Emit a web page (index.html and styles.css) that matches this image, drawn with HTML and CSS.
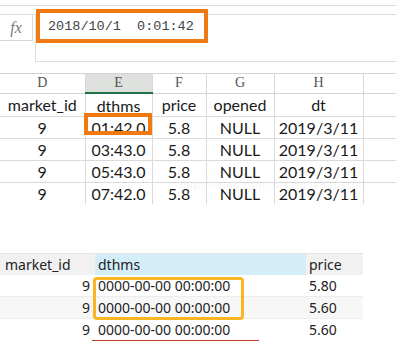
FILE: index.html
```html
<!DOCTYPE html>
<html lang="zh-CN">
<head>
<meta charset="UTF-8">
<meta name="viewport" content="width=device-width, initial-scale=1.0">
<title>dthms</title>
<link rel="stylesheet" href="styles.css">
</head>
<body>
    <!-- 엑셀 수식 입력줄 -->
    <div class="ribbon"></div>
    <div class="fbar">
        <div class="fx">fx</div>
        <div class="formula">
            <div class="cell-value">2018/10/1&nbsp;&nbsp;0:01:42</div>
        </div>
    </div>

    <!-- 엑셀 시트 -->
    <div class="excel-wrap">
        <table class="excel">
            <colgroup>
                <col class="c-d"><col class="c-e"><col class="c-f"><col class="c-g"><col class="c-h"><col>
            </colgroup>
            <thead>
                <tr><th>D</th><th class="active">E</th><th>F</th><th>G</th><th>H</th><th></th></tr>
            </thead>
            <tbody>
                <tr><td>market_id</td><td>dthms</td><td>price</td><td>opened</td><td>dt</td><td></td></tr>
                <tr><td>9</td><td class="marked"><span class="box"></span>01:42.0</td><td>5.8</td><td>NULL</td><td>2019/3/11</td><td></td></tr>
                <tr><td>9</td><td>03:43.0</td><td>5.8</td><td>NULL</td><td>2019/3/11</td><td></td></tr>
                <tr><td>9</td><td>05:43.0</td><td>5.8</td><td>NULL</td><td>2019/3/11</td><td></td></tr>
                <tr><td>9</td><td>07:42.0</td><td>5.8</td><td>NULL</td><td>2019/3/11</td><td></td></tr>
            </tbody>
        </table>
        <span class="watermark">https://blog.csdn.net/qq_43213100</span>
    </div>

    <!-- DB 조회 결과 -->
    <div class="db-wrap">
        <table class="db">
            <colgroup>
                <col class="c-id"><col class="c-time"><col class="c-price">
            </colgroup>
            <thead>
                <tr><th>market_id</th><th class="sel">dthms</th><th>price</th></tr>
            </thead>
            <tbody>
                <tr><td class="num">9</td><td>0000-00-00 00:00:00</td><td>5.80</td></tr>
                <tr class="alt"><td class="num">9</td><td>0000-00-00 00:00:00</td><td>5.60</td></tr>
                <tr><td class="num">9</td><td>0000-00-00 00:00:00</td><td>5.60</td></tr>
            </tbody>
        </table>
        <span class="amber"></span>
        <span class="redline"></span>
    </div>
</body>
</html>
```

FILE: styles.css
```css
body, html {
    margin: 0;
    padding: 0;
    background-color: #fff;
}
body {
    width: 396px;
    height: 361px;
    overflow: hidden;
}
.ribbon {
    height: 5px;
    border-bottom: 1px solid #dcdcdc;
}
.fbar {
    display: flex;
    margin-top: 8px;
    height: 48px;
    box-sizing: border-box;
    border-top: 1px solid #dcdcdc;
}
.fx {
    width: 33px;
    height: 26px;
    box-sizing: border-box;
    border-right: 1px solid #d6d6d6;
    border-bottom: 1px solid #d6d6d6;
    margin-right: 2px;
    text-align: center;
    font: italic 16px/25px "Liberation Serif", serif;
    color: #7a7a7a;
}
.formula {
    flex: 1;
    position: relative;
    border-left: 1px solid #dcdcdc;
    border-bottom: 1px solid #dcdcdc;
}
.cell-value {
    position: absolute; /* 강조 박스 */
    left: 0;
    top: -6px;
    width: 172px;
    height: 34px;
    box-sizing: border-box;
    border: 4px solid #f07a12;
    padding-left: 8px;
    background: #fff;
    font: 13.5px/27px "Liberation Mono", monospace;
    color: #444;
    white-space: nowrap;
}

/* 엑셀 시트 */
.excel-wrap {
    position: relative;
    margin-top: 11px;
}
.excel {
    width: 396px;
    table-layout: fixed;
    border-collapse: collapse;
}
.c-d { width: 85px; }
.c-e { width: 67px; }
.c-f { width: 54px; }
.c-g { width: 68px; }
.c-h { width: 89px; }
.excel th {
    height: 18px;
    padding: 0;
    border-top: 1px solid #d4d4d4;
    border-bottom: 1px solid #d4d4d4;
    border-right: 1px solid #d8d8d8;
    font: 14px/18px "Liberation Serif", serif;
    font-weight: normal;
    color: #555;
}
.excel th.active {
    background-color: #dfe1df;
    border-bottom: 2px solid #217346;
}
.excel td {
    height: 21px;
    padding: 0;
    border-right: 1px solid #dadada;
    border-bottom: 1px solid #dadada;
    text-align: center;
    font: 16px/21px "Lato", sans-serif;
    color: #1a1a1a;
}
.excel tbody tr:first-child td {
    height: 22px;
}
.excel tbody tr:last-child td {
    border-bottom: none;
}
.excel th:last-child,
.excel td:last-child {
    border-right: none;
}
.marked {
    position: relative;
}
.box {
    position: absolute;
    left: -2px;
    top: -4px;
    right: 0;
    bottom: 3px;
    border: 4px solid #f07a12;
}
.watermark {
    position: absolute;
    left: 180px;
    top: 106px;
    font: 11px "Liberation Sans", sans-serif;
    letter-spacing: 0.5px;
    color: rgba(0, 0, 0, 0.06);
    white-space: nowrap;
}

/* DB 결과 */
.db-wrap {
    position: relative;
    margin-top: 49px;
    width: 363px;
}
.db {
    width: 363px;
    table-layout: fixed;
    border-collapse: collapse;
    font: 14px "Noto Sans", sans-serif;
    color: #222;
}
.c-id { width: 95px; }
.c-time { width: 211px; }
.c-price { width: 57px; }
.db th {
    height: 21px;
    padding: 0 0 0 3px;
    border-top: 1px solid #e6e6e6;
    background-color: #f1f1f1;
    text-align: left;
    font-weight: normal;
}
.db th:first-child {
    padding-left: 5px;
}
.db th.sel {
    background-color: #d3edf9;
}
.db td {
    height: 21px;
    padding: 0 0 0 3px;
    border-bottom: 1px solid #ececec;
    white-space: nowrap;
}
.db td.num {
    text-align: right;
    padding: 0 5px 0 0;
}
.db tr.alt td {
    background-color: #f7f7f7;
}
.db tbody tr:last-child td {
    border-bottom: none;
}
.amber {
    position: absolute;
    left: 93px;
    top: 24px;
    width: 151px;
    height: 43px;
    box-sizing: border-box;
    border: 3px solid #f9b522;
    border-radius: 4px;
}
.redline {
    position: absolute;
    left: 92px;
    top: 87px;
    width: 167px;
    height: 1px;
    background-color: #c0392b;
}
```
